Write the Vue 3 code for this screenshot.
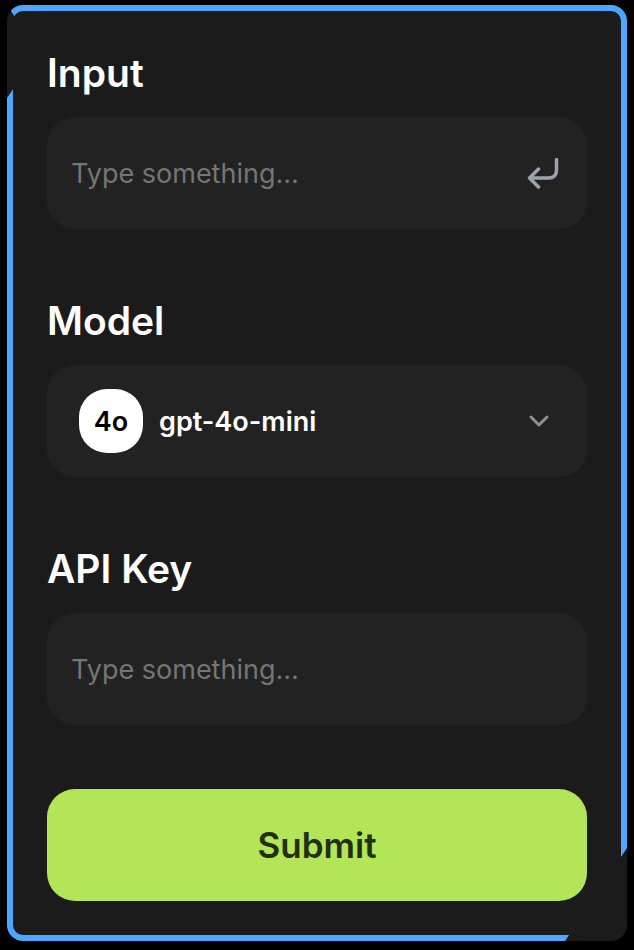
<script setup>
import { ref } from 'vue'

const prompt = ref('')
const apiKey = ref('')
const model = ref('gpt-4o-mini')
const models = [{ id: 'gpt-4o-mini', badge: '4o' }]
</script>

<template>
  <main class="page">
    <form class="card" @submit.prevent>
      <div class="group">
        <label class="title" for="prompt">Input</label>
        <div class="field">
          <input id="prompt" v-model="prompt" class="control" type="text" placeholder="Type something…" />
          <svg class="enter" viewBox="0 0 64 64" aria-hidden="true">
            <path d="M59 5v21q0 16-16 16H5M23 24l-18 18 18 18" />
          </svg>
        </div>
      </div>

      <div class="group">
        <label class="title" for="model">Model</label>
        <div class="field field-model">
          <span class="badge" aria-hidden="true">{{ models.find((m) => m.id === model).badge }}</span>
          <select id="model" v-model="model" class="control select">
            <option v-for="m in models" :key="m.id" :value="m.id">{{ m.id }}</option>
          </select>
          <svg class="chevron" viewBox="0 0 24 24" aria-hidden="true">
            <path d="M4 8l8 8 8-8" />
          </svg>
        </div>
      </div>

      <div class="group">
        <label class="title" for="key">API Key</label>
        <div class="field">
          <input id="key" v-model="apiKey" class="control" type="text" placeholder="Type something…" />
        </div>
      </div>

      <button class="submit" type="submit">Submit</button>
    </form>
  </main>
</template>

<style>
body {
  background: #000;
}
</style>

<style scoped>
.page {
  padding: 5px 7px 9px;
  font-family: Inter, "Liberation Sans", sans-serif;
}

.card {
  position: relative;
  display: flex;
  flex-direction: column;
  gap: 64px;
  padding: 40px;
  border-radius: 16px;
  background: #1b1b1b;
}

/* Running border light: two corners of the outline are left dark. */
.card::after {
  content: "";
  position: absolute;
  inset: 0;
  border: 6px solid #4da6ff;
  border-radius: 16px;
  pointer-events: none;
  clip-path: polygon(
    0 0,
    100% 0,
    100% calc(100% - 93px),
    calc(100% - 62px) 100%,
    0 100%,
    0 93px,
    31px 47px
  );
}

.group {
  display: flex;
  flex-direction: column;
  gap: 16px;
}

.title {
  color: #fff;
  font-size: 39px;
  font-weight: 600;
  line-height: 56px;
}

.field {
  display: flex;
  align-items: center;
  height: 112px;
  padding: 0 28px 0 24px;
  box-sizing: border-box;
  border-radius: 28px;
  background: #222;
}

.field-model {
  gap: 16px;
  padding: 0 36px 0 32px;
}

.control {
  flex: 1;
  min-width: 0;
  height: 100%;
  padding: 0;
  border: 0;
  outline: 0;
  background: transparent;
  color: #fff;
  font: inherit;
  font-size: 27px;
}

.control::placeholder {
  color: #757575;
  opacity: 1;
}

.select {
  appearance: none;
  font-weight: 600;
}

.badge {
  display: flex;
  align-items: center;
  justify-content: center;
  width: 64px;
  height: 64px;
  border-radius: 28px;
  background: #fff;
  color: #000;
  font-size: 27px;
  font-weight: 600;
}

.enter,
.chevron {
  flex: none;
  fill: none;
  stroke-linecap: round;
  stroke-linejoin: round;
}

.enter {
  width: 32px;
  height: 32px;
  stroke: #9ca3af;
  stroke-width: 7;
}

.chevron {
  width: 24px;
  height: 24px;
  stroke: #8f8f8f;
  stroke-width: 3;
}

.submit {
  height: 112px;
  padding: 0;
  border: 0;
  border-radius: 28px;
  background: #b2e558;
  color: #232f12;
  font: inherit;
  font-size: 35px;
  font-weight: 600;
}
</style>
